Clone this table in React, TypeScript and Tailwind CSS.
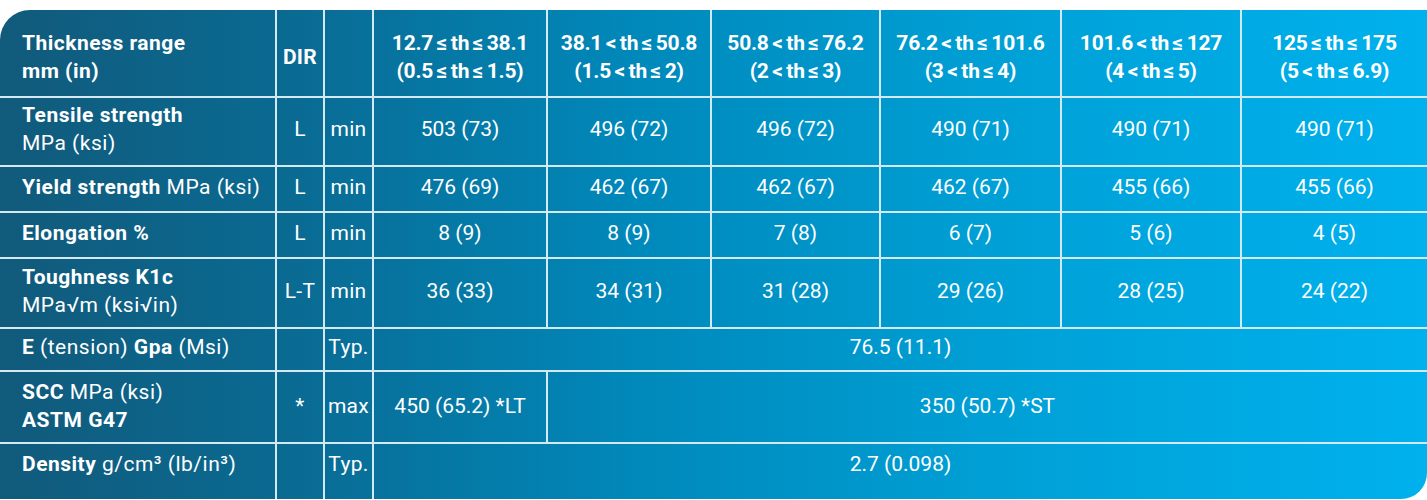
import React from "react";

const heads = [
  ["12.7 ≤ th ≤ 38.1", "(0.5 ≤ th ≤ 1.5)"],
  ["38.1 < th ≤ 50.8", "(1.5 < th ≤ 2)"],
  ["50.8 < th ≤ 76.2", "(2 < th ≤ 3)"],
  ["76.2 < th ≤ 101.6", "(3 < th ≤ 4)"],
  ["101.6 < th ≤ 127", "(4 < th ≤ 5)"],
  ["125 ≤ th ≤ 175", "(5 < th ≤ 6.9)"],
];

const B = ({ children }: { children: React.ReactNode }) => (
  <span className="font-bold">{children}</span>
);

const cellBase = "flex items-center border-[#d3eaf3] whitespace-nowrap";

function Cell({
  children,
  row,
  col,
  className = "",
  span = 1,
}: {
  children?: React.ReactNode;
  row: number;
  col: number;
  className?: string;
  span?: number;
}) {
  const borders =
    (col > 0 ? " border-l-2" : "") + (row > 0 ? " border-t-2" : "");
  return (
    <div
      className={cellBase + borders + " " + className}
      style={{ gridColumn: `${col + 1} / span ${span}`, gridRow: row + 1 }}
    >
      {children}
    </div>
  );
}

const rows: {
  label: React.ReactNode;
  dir: string;
  kind: string;
  vals: string[];
}[] = [
  {
    label: (
      <>
        <B>Tensile strength</B>
        <br />
        MPa (ksi)
      </>
    ),
    dir: "L",
    kind: "min",
    vals: ["503 (73)", "496 (72)", "496 (72)", "490 (71)", "490 (71)", "490 (71)"],
  },
  {
    label: (
      <>
        <B>Yield strength</B> MPa (ksi)
      </>
    ),
    dir: "L",
    kind: "min",
    vals: ["476 (69)", "462 (67)", "462 (67)", "462 (67)", "455 (66)", "455 (66)"],
  },
  {
    label: <B>Elongation %</B>,
    dir: "L",
    kind: "min",
    vals: ["8 (9)", "8 (9)", "7 (8)", "6 (7)", "5 (6)", "4 (5)"],
  },
  {
    label: (
      <>
        <B>Toughness K1c</B>
        <br />
        MPa√m (ksi√in)
      </>
    ),
    dir: "L-T",
    kind: "min",
    vals: ["36 (33)", "34 (31)", "31 (28)", "29 (26)", "28 (25)", "24 (22)"],
  },
];

const lab = "pl-[22px] tracking-[0.5px]";
const mid = "justify-center tracking-[0.3px]";
const val = "justify-center";

export default function App() {
  return (
    <div className="w-[1427px] h-[500px] bg-white pt-[10px]">
      <div
        className="grid h-[489px] rounded-tl-[30px] rounded-br-[26px] overflow-hidden text-white text-[21px] leading-[28px] bg-[linear-gradient(90deg,#115a7b_0%,#0a6a92_20%,#0089bb_45%,#00a0d6_70%,#00b1ed_100%)]"
        style={{
          fontFamily: "Roboto, 'Liberation Sans', sans-serif",
          gridTemplateColumns: "275px 48px 49px 174px 164px 169px 181px 180px 187px",
          gridTemplateRows: "86px 69px 46px 46px 70px 43px 72px 57px",
        }}
      >
        {/* header */}
        <Cell row={0} col={0} className={lab + " font-bold pt-[7px]"}>
          <div>
            Thickness range
            <br />
            mm (in)
          </div>
        </Cell>
        <Cell row={0} col={1} className={mid + " font-bold pt-[7px]"}>
          DIR
        </Cell>
        <Cell row={0} col={2} />
        {heads.map((h, i) => (
          <Cell key={i} row={0} col={3 + i} className="justify-center text-center font-bold pt-[7px] tracking-[-0.2px] [word-spacing:-1.5px]">
            <div>
              {h[0]}
              <br />
              {h[1]}
            </div>
          </Cell>
        ))}

        {rows.map((r, ri) => (
          <React.Fragment key={ri}>
            <Cell row={ri + 1} col={0} className={lab + " pb-[5px]"}>
              <div>{r.label}</div>
            </Cell>
            <Cell row={ri + 1} col={1} className={mid + " pb-[5px]"}>
              {r.dir}
            </Cell>
            <Cell row={ri + 1} col={2} className={mid + " pb-[5px]"}>
              {r.kind}
            </Cell>
            {r.vals.map((v, vi) => (
              <Cell key={vi} row={ri + 1} col={3 + vi} className={val + " pb-[5px]"}>
                {v}
              </Cell>
            ))}
          </React.Fragment>
        ))}

        {/* E */}
        <Cell row={5} col={0} className={lab + " pb-[5px]"}>
          <div>
            <B>E</B> (tension) <B>Gpa</B> (Msi)
          </div>
        </Cell>
        <Cell row={5} col={1} />
        <Cell row={5} col={2} className={mid + " pb-[5px]"}>
          Typ.
        </Cell>
        <Cell row={5} col={3} span={6} className={val + " pb-[5px]"}>
          76.5 (11.1)
        </Cell>

        {/* SCC */}
        <Cell row={6} col={0} className={lab + " pb-[3px]"}>
          <div>
            <B>SCC</B> MPa (ksi)
            <br />
            <B>ASTM G47</B>
          </div>
        </Cell>
        <Cell row={6} col={1} className={mid + " pb-[3px]"}>
          *
        </Cell>
        <Cell row={6} col={2} className={mid + " pb-[3px]"}>
          max
        </Cell>
        <Cell row={6} col={3} className={val + " pb-[3px]"}>
          450 (65.2) *LT
        </Cell>
        <Cell row={6} col={4} span={5} className={val + " pb-[3px]"}>
          350 (50.7) *ST
        </Cell>

        {/* Density */}
        <Cell row={7} col={0} className={lab + " pb-[16px]"}>
          <div>
            <B>Density</B> g/cm³ (lb/in³)
          </div>
        </Cell>
        <Cell row={7} col={1} />
        <Cell row={7} col={2} className={mid + " pb-[16px]"}>
          Typ.
        </Cell>
        <Cell row={7} col={3} span={6} className={val + " pb-[16px]"}>
          2.7 (0.098)
        </Cell>
      </div>
    </div>
  );
}
